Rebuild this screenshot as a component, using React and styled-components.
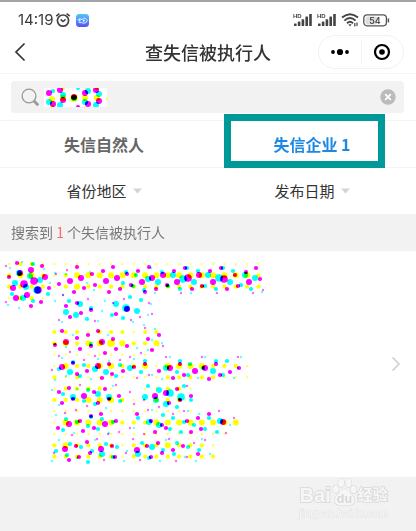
import React from "react";
import styled, { createGlobalStyle } from "styled-components";

const GlobalStyle = createGlobalStyle`
  * {
    box-sizing: border-box;
  }
  body {
    margin: 0;
    background: #f2f2f2;
    color: #333;
    font-family: "Noto Sans CJK SC", sans-serif;
  }
  button,
  input {
    font: inherit;
    color: inherit;
    border: none;
    padding: 0;
    background: none;
    outline: none;
  }
`;

const Page = styled.div`
  display: flex;
  flex-direction: column;
  min-height: 100vh;
  border-top: 2px solid #a3a3a3;
`;

const StatusBar = styled.div`
  display: flex;
  align-items: center;
  justify-content: space-between;
  height: 32px;
  padding: 4px 26px 0 18px;
  background: #fff;
`;

const StatusGroup = styled.div`
  display: flex;
  align-items: center;
  gap: ${(p) => p.$gap}px;
`;

const Clock = styled.span`
  font-family: Inter, sans-serif;
  font-size: 15px;
  line-height: 20px;
  color: #3a3a3a;
`;

const NavBar = styled.header`
  display: grid;
  grid-template-columns: 1fr auto 1fr;
  align-items: center;
  height: 40px;
  padding: 0 12px 3px;
  background: #fff;
  border-bottom: 1px solid #f3f3f3;
`;

const Title = styled.h1`
  margin: 0;
  font-size: 18px;
  line-height: 24px;
  font-weight: 500;
`;

const BackButton = styled.button`
  display: flex;
  justify-self: start;
`;

const Capsule = styled.div`
  display: flex;
  align-items: center;
  justify-self: end;
  width: 86px;
  height: 34px;
  border: 1px solid #f2f2f2;
  border-radius: 17px;
`;

const CapsuleButton = styled.button`
  display: flex;
  flex: 1;
  align-items: center;
  justify-content: center;
  height: 24px;
  & + & {
    border-left: 1px solid #f2f2f2;
  }
`;

const SearchBar = styled.form`
  padding: 7px 12px 7px 11px;
  background: #fff;
  border-bottom: 1px solid #f3f3f3;
`;

const SearchBox = styled.label`
  display: flex;
  align-items: center;
  gap: 4px;
  height: 32px;
  padding: 0 8px 0 10px;
  border-radius: 4px;
  background: #f2f2f2;
`;

const SearchInput = styled.input`
  flex: 1;
  min-width: 0;
  height: 24px;
  font-size: 15px;
`;

const ClearButton = styled.button`
  display: flex;
`;

const Tabs = styled.nav`
  display: flex;
  background: #fff;
  border-bottom: 1px solid #f3f3f3;
`;

const Tab = styled.button`
  position: relative;
  flex: 1;
  height: 46px;
  font-size: 16px;
  line-height: 24px;
  font-weight: 700;
  color: ${(p) => (p.$active ? "#1e88e5" : "#666")};
`;

const Highlight = styled.span`
  position: absolute;
  top: -7px;
  right: 31px;
  bottom: -1px;
  left: 16px;
  border: 7px solid #099;
`;

const Filters = styled.div`
  display: flex;
  background: #fff;
`;

const Filter = styled.button`
  display: flex;
  flex: 1;
  align-items: center;
  justify-content: center;
  gap: 6px;
  height: 46px;
  font-size: 15px;
  line-height: 24px;
`;

const Summary = styled.p`
  margin: 0;
  padding: 6px 11px 7px;
  font-size: 14px;
  line-height: 24px;
  color: #777;
  em {
    font-style: normal;
    color: #f56c6c;
  }
`;

const Result = styled.a`
  display: flex;
  align-items: center;
  justify-content: space-between;
  padding: 0 15px 0 0;
  background: #fff;
`;

const Footer = styled.footer`
  display: flex;
  flex: 1;
  justify-content: flex-end;
  padding: 0 28px 8px 0;
`;

const Watermark = styled.div`
  display: flex;
  flex-direction: column;
  align-items: center;
  color: #f6f6f6;
  font-family: "Liberation Sans", "Noto Sans CJK SC", sans-serif;
  -webkit-text-stroke: 2px #dcdcdc;
  paint-order: stroke fill;
`;

const WatermarkName = styled.div`
  display: flex;
  align-items: flex-end;
  gap: 1px;
  height: 30px;
  font-size: 20px;
  line-height: 24px;
  font-weight: 700;
  small {
    font-size: 15px;
    line-height: 24px;
  }
`;

const WatermarkSite = styled.div`
  font-size: 11px;
  line-height: 12px;
  color: #f6f6f6;
  -webkit-text-stroke: 1px #e4e4e4;
`;

const Dots = styled.svg`
  display: block;
  flex: none;
  circle {
    mix-blend-mode: multiply;
  }
`;

const INKS = { c: "#0ff", m: "#f0f", y: "#ff0" };
const RADII = [0, 1.2, 2.1, 3, 3.8];

// each dot is "x y size", sizes run from 1 to 4
const RESULT_MAGENTA = `17 263 2,6 266 1,42 266 2,31 270 3,20 273 3,9 277 2,45 277 3,34 281 4,24 284 4,13 288 3,49 288 2,38 290 4,27 295 3,16 298 3,6 302 1,41 302 2,31 306 2,
77 267 2,113 267 2,67 270 1,103 271 2,56 274 1,92 274 2,127 274 2,138 271 2,81 278 3,117 278 3,70 281 3,106 281 3,59 284 2,95 285 2,131 285 2,84 288 2,120 289 2,74 292 2,109 292 2,88 299 1,124 299 1,63 295 1,
149 267 2,185 268 2,221 268 2,256 268 2,174 271 2,210 271 2,246 272 2,163 275 3,199 275 3,235 275 2,152 278 3,188 278 4,224 279 4,260 279 2,142 282 3,177 282 3,213 282 3,249 282 3,167 285 2,202 286 2,238 286 2,156 289 2,192 289 2,227 289 2,263 290 1,145 292 2,181 293 1,217 293 1,253 293 1,
77 303 2,113 303 1,66 306 2,127 309 3,91 310 2,81 313 2,116 314 2,70 317 2,59 320 1,95 321 1,131 320 1,149 303 1,140 317 1,152 314 1,145 328 1,
62 331 2,98 331 2,88 335 2,77 338 2,113 339 2,66 342 3,102 342 3,55 345 2,91 346 2,127 346 2,80 349 2,116 349 2,70 352 1,105 353 2,59 356 1,95 356 1,130 357 1,159 335 2,148 339 2,163 346 1,152 350 2,141 353 1,
166 357 1,202 357 1,238 357 1,84 360 1,120 360 1,73 363 2,109 364 2,62 367 3,98 366 3,134 367 2,52 370 1,87 371 2,123 371 2,77 374 2,112 374 2,102 378 2,137 378 1,145 364 2,180 364 2,216 364 2,170 368 3,205 368 3,239 368 2,159 371 2,195 371 3,230 372 2,149 375 1,184 375 2,220 375 2,173 378 2,209 379 2,
80 385 1,116 385 1,69 388 2,105 389 2,59 392 2,94 392 2,130 392 1,84 396 3,119 396 2,73 399 2,109 399 2,62 403 2,98 403 2,134 404 1,187 386 1,177 389 2,166 393 3,155 396 3,191 396 2,180 400 2,144 400 1,169 403 2,159 407 1,87 406 1,
76 410 1,65 413 1,101 414 2,137 414 2,91 416 2,80 421 2,116 421 2,69 424 3,105 424 3,58 428 2,94 428 2,130 428 1,83 431 2,119 432 1,72 435 1,108 434 1,148 410 1,184 411 1,219 411 1,173 414 1,209 414 2,151 421 2,187 421 2,223 422 3,198 418 2,234 418 1,162 425 2,166 428 2,201 429 2,155 432 2,191 432 2,226 433 1,144 434 1,
97 439 1,133 439 1,87 442 2,76 446 2,112 446 2,65 449 3,101 449 3,137 450 3,54 453 1,90 453 2,126 453 1,79 457 2,115 457 2,69 460 2,104 460 1,169 439 1,158 443 2,205 440 1,194 443 1,183 446 2,147 446 2,173 450 2,162 453 2,198 454 2,151 457 2,187 457 1,140 460 1,176 461 1`;

const RESULT_CYAN = `10 268 1,22 262 1,33 264 2,19 273 3,44 269 1,30 276 3,40 280 3,15 283 3,50 283 1,26 287 3,37 290 4,12 294 2,48 294 2,23 298 3,33 301 2,8 305 1,19 308 1,
66 274 1,55 273 1,90 272 1,126 272 2,136 275 2,87 283 1,123 283 2,133 286 2,94 290 1,130 297 2,63 295 1,55 301 1,
151 268 1,187 268 2,223 268 2,162 272 2,198 271 2,233 271 2,173 275 3,208 275 3,245 275 3,148 279 3,183 279 4,219 278 4,255 278 3,158 282 3,194 282 3,230 282 3,168 286 2,205 286 2,241 285 2,180 289 2,216 289 2,251 289 2,144 290 2,155 293 1,191 293 1,262 292 1,
69 301 2,105 301 1,80 304 3,116 304 3,91 308 2,126 308 4,137 311 3,66 312 3,102 311 1,76 315 3,112 315 2,87 319 2,123 318 2,62 322 1,98 321 1,133 322 1,141 300 2,151 304 1,148 315 1,144 325 1,155 329 1,
73 335 1,108 335 1,55 344 1,91 344 2,66 347 1,102 342 1,137 348 1,62 358 1,98 359 1,134 359 1,152 340 1,162 343 1,148 350 1,
170 357 1,205 357 1,241 357 1,73 362 2,59 369 2,84 365 2,95 369 3,120 365 2,109 361 1,130 368 3,70 372 3,106 372 3,80 376 2,116 376 2,91 379 1,66 376 1,55 380 1,145 361 2,180 361 2,216 361 2,190 364 2,227 361 2,166 368 3,203 368 2,238 368 1,141 372 2,177 372 2,213 371 3,152 375 1,188 375 2,223 375 2,162 379 1,198 378 1,234 378 1,
73 397 3,88 390 2,113 386 1,63 394 2,98 394 3,77 389 1,109 397 3,84 401 2,120 401 2,52 390 1,59 405 1,95 404 2,148 386 2,184 386 2,159 390 3,170 393 4,145 397 3,181 397 4,156 400 3,191 400 2,166 404 3,177 407 2,
91 417 2,66 419 2,56 415 1,106 408 1,102 419 2,138 418 2,77 422 2,113 422 2,88 426 2,63 430 2,98 429 2,134 428 1,74 433 1,109 433 1,152 410 1,188 411 1,163 415 2,199 414 1,149 422 3,184 422 2,220 421 3,173 418 2,209 418 2,159 425 3,194 425 2,230 425 1,170 429 2,205 429 2,181 432 2,217 432 2,
59 440 1,95 440 1,70 444 2,106 444 2,81 447 2,117 447 2,56 451 2,92 451 2,127 451 1,67 455 2,102 454 3,138 454 3,77 458 1,113 457 2,88 462 2,52 461 1,124 461 1,166 440 1,202 439 1,142 443 2,177 443 2,152 447 3,188 447 2,163 450 2,199 450 2,174 454 2,210 454 1,149 458 2,185 457 1,160 461 1,196 461 1`;

// one string per row, one digit per grid column
const RESULT_YELLOW = [
  "12211111111111111111111",
  "23321233333333333333332",
  "22221232222222222222222",
  "1221",
  "",
  "",
  "00002221222122",
  "00002323343223",
  "0000111111111",
  "0000132233223133332221",
  "0000212111111122222111",
  "00001222210011221",
  "0000222333210222",
  "00001111111111111",
  "000013333322233333333",
  "00001111111111111111",
  "0000232222122232221",
  "0000222222122222222",
];

const SEARCH_MAGENTA =
  "49 93 3,60 90 3,63 100 3,53 104 3,74 97 3,85 93 3,96 90 3,99 101 3,88 104 3,78 107 2";
const SEARCH_CYAN =
  "53 91 2,63 95 3,49 102 3,60 105 3,74 98 3,88 91 3,99 94 3,85 102 3,96 105 3,78 88 2";
const SEARCH_YELLOW =
  "52 99 3,63 98 3,74 98 4,85 98 3,97 98 3,108 99 2,63 88 2,52 107 2,85 88 1,97 88 2,85 107 1";

function parseDots(list, ink) {
  return list.split(",").map((d) => {
    const [x, y, size] = d.trim().split(" ").map(Number);
    return { x, y, size, ink };
  });
}

function gridDots(rows) {
  return rows.flatMap((row, j) =>
    [...row].map((d, i) => ({
      x: 9 + i * 11.34,
      y: 264 + j * 11.33,
      size: Number(d),
      ink: "y",
    }))
  );
}

const resultDots = [
  ...gridDots(RESULT_YELLOW),
  ...parseDots(RESULT_MAGENTA, "m"),
  ...parseDots(RESULT_CYAN, "c"),
];

const searchDots = [
  ...parseDots(SEARCH_YELLOW, "y"),
  ...parseDots(SEARCH_MAGENTA, "m"),
  ...parseDots(SEARCH_CYAN, "c"),
];

function Halftone({ dots, x, y, width, height }) {
  return (
    <Dots
      width={width}
      height={height}
      viewBox={`${x} ${y} ${width} ${height}`}
      aria-hidden="true"
    >
      <rect x={x} y={y} width={width} height={height} fill="#fff" />
      {dots.map((d, i) => (
        <circle
          key={i}
          cx={d.x}
          cy={d.y}
          r={RADII[d.size]}
          fill={INKS[d.ink]}
          opacity={d.size === 1 ? 0.6 : 1}
        />
      ))}
    </Dots>
  );
}

function AlarmIcon() {
  return (
    <svg width="16" height="16" viewBox="0 0 16 16" fill="none" stroke="#444">
      <circle cx="8" cy="8.6" r="5.6" strokeWidth="1.7" />
      <path d="M1.2 4.2 4.4 1.6M14.8 4.2 11.6 1.6" strokeWidth="1.6" />
      <path d="M5.6 7.4 8 9.6 10.6 7.4" strokeWidth="1.5" />
    </svg>
  );
}

function AppBadge() {
  return (
    <svg width="13" height="13" viewBox="0 0 13 13">
      <defs>
        <linearGradient id="badge" x1="0" y1="0" x2="0" y2="1">
          <stop offset="0" stopColor="#55c4fb" />
          <stop offset="0.55" stopColor="#4d8dfb" />
          <stop offset="1" stopColor="#5b4dfa" />
        </linearGradient>
      </defs>
      <rect width="13" height="13" rx="3.4" fill="url(#badge)" />
      <path
        d="M1.5 5.5 4 7.2 3.4 4.6 6 5.6C7.6 3.2 10.4 4 11.2 6.6 10.4 9.2 7.6 9.8 5.4 8.6L2.6 8.2"
        fill="none"
        stroke="#e6f4ff"
        strokeWidth="1"
      />
      <circle cx="7.8" cy="6.7" r="1.1" fill="#e6f4ff" />
    </svg>
  );
}

function SignalIcon() {
  return (
    <svg width="20" height="14" viewBox="0 0 20 14" fill="#444">
      <text
        x="0"
        y="5"
        fontFamily="Liberation Sans, sans-serif"
        fontSize="6"
        fontWeight="700"
      >
        HD
      </text>
      <rect x="1" y="10.5" width="2.6" height="2.5" rx="0.5" />
      <rect x="4.8" y="8.5" width="2.6" height="4.5" rx="0.5" />
      <rect x="8.6" y="6.3" width="2.6" height="6.7" rx="0.5" />
      <rect x="12.4" y="3.6" width="2.6" height="9.4" rx="0.5" />
      <rect x="16.2" y="1" width="2.6" height="12" rx="0.5" />
    </svg>
  );
}

function WifiIcon() {
  return (
    <svg width="18" height="14" viewBox="0 0 18 14" fill="none" stroke="#444">
      <path d="M1 4.6Q9-2 17 4.6" strokeWidth="1.9" />
      <path d="M3.4 7.6Q9 2.6 14.6 7.6" strokeWidth="1.9" />
      <path d="M6 10.2Q9 7.4 12 10.2" strokeWidth="1.9" />
      <path d="M7.4 11.2h3.2L9 13.4z" fill="#444" stroke="none" />
      <path d="M13.8 13.5V10M16 9.5V13" strokeWidth="1.2" />
    </svg>
  );
}

function BatteryIcon() {
  return (
    <svg width="27" height="13" viewBox="0 0 27 13">
      <rect x="2.5" y="2.5" width="12" height="8" rx="2" fill="#ddd" />
      <rect
        x="0.8"
        y="0.8"
        width="22.6"
        height="11"
        rx="3.2"
        fill="none"
        stroke="#555"
        strokeWidth="1.3"
      />
      <path d="M25.4 4.4v4" stroke="#555" strokeWidth="1.5" />
      <text
        x="12"
        y="9.6"
        textAnchor="middle"
        fontFamily="Inter, sans-serif"
        fontSize="9"
        fontWeight="500"
        fill="#333"
      >
        54
      </text>
    </svg>
  );
}

function Caret() {
  return (
    <svg width="9" height="6" viewBox="0 0 9 6" aria-hidden="true">
      <path d="M0 0.5h9L4.5 5.6z" fill="#d4d4d4" />
    </svg>
  );
}

function Paw() {
  return (
    <svg width="25" height="30" viewBox="0 0 26 30">
      <g fill="#f6f6f6" stroke="#d8d8d8" strokeWidth="1.2">
        <ellipse cx="4" cy="12" rx="3" ry="4" />
        <ellipse cx="9.5" cy="5.5" rx="3.2" ry="4.5" />
        <ellipse cx="17" cy="5.5" rx="3.2" ry="4.5" />
        <ellipse cx="22.5" cy="12.5" rx="3" ry="4" />
        <path d="M13 12C17 12 18 16 21 18.5 25 22 24 28.5 18.5 28.5H7.5C2 28.5 1 22 5 18.5 8 16 9 12 13 12Z" />
      </g>
      <text
        x="13"
        y="26"
        textAnchor="middle"
        fontFamily="Liberation Sans, sans-serif"
        fontSize="13"
        fontWeight="700"
        fill="#d8d8d8"
        stroke="none"
      >
        du
      </text>
    </svg>
  );
}

export default function App() {
  const [tab, setTab] = React.useState("company");
  const [query, setQuery] = React.useState("");

  return (
    <>
      <GlobalStyle />
      <Page>
        <StatusBar>
          <StatusGroup $gap={5}>
            <StatusGroup $gap={1}>
              <Clock>14:19</Clock>
              <AlarmIcon />
            </StatusGroup>
            <AppBadge />
          </StatusGroup>
          <StatusGroup $gap={4}>
            <SignalIcon />
            <SignalIcon />
            <WifiIcon />
            <BatteryIcon />
          </StatusGroup>
        </StatusBar>
        <NavBar>
          <BackButton aria-label="返回">
            <svg width="16" height="20" viewBox="0 0 16 20" fill="none">
              <path d="M12.5 1.5 4 10l8.5 8.5" stroke="#333" strokeWidth="1.7" />
            </svg>
          </BackButton>
          <Title>查失信被执行人</Title>
          <Capsule>
            <CapsuleButton aria-label="更多">
              <svg width="18" height="8" viewBox="0 0 18 8">
                <circle cx="2" cy="4" r="1.9" />
                <circle cx="9" cy="4" r="3.1" />
                <circle cx="16" cy="4" r="1.9" />
              </svg>
            </CapsuleButton>
            <CapsuleButton aria-label="关闭">
              <svg width="18" height="18" viewBox="0 0 18 18">
                <circle
                  cx="9"
                  cy="9"
                  r="7"
                  fill="none"
                  stroke="#000"
                  strokeWidth="2.2"
                />
                <circle cx="9" cy="9" r="2.8" />
              </svg>
            </CapsuleButton>
          </Capsule>
        </NavBar>
        <SearchBar onSubmit={(e) => e.preventDefault()}>
          <SearchBox>
            <svg width="19" height="19" viewBox="0 0 19 19" fill="none">
              <circle cx="8" cy="8" r="6.9" stroke="#999" strokeWidth="1.3" />
              <path d="M12.8 12.8 17.2 17.2" stroke="#999" strokeWidth="2.8" />
            </svg>
            <Halftone dots={searchDots} x={44} y={88} width={63} height={19} />
            <SearchInput
              aria-label="搜索"
              value={query}
              onChange={(e) => setQuery(e.target.value)}
            />
            <ClearButton
              type="button"
              aria-label="清除"
              onClick={() => setQuery("")}
            >
              <svg width="16" height="16" viewBox="0 0 16 16">
                <circle cx="8" cy="8" r="7.7" fill="#bbb" />
                <path
                  d="M5.2 5.2l5.6 5.6M10.8 5.2l-5.6 5.6"
                  stroke="#fff"
                  strokeWidth="1.7"
                />
              </svg>
            </ClearButton>
          </SearchBox>
        </SearchBar>
        <Tabs>
          <Tab $active={tab === "person"} onClick={() => setTab("person")}>
            失信自然人
          </Tab>
          <Tab $active={tab === "company"} onClick={() => setTab("company")}>
            失信企业 1
            <Highlight />
          </Tab>
        </Tabs>
        <Filters>
          <Filter>
            省份地区
            <Caret />
          </Filter>
          <Filter>
            发布日期
            <Caret />
          </Filter>
        </Filters>
        <Summary>
          搜索到 <em>1</em> 个失信被执行人
        </Summary>
        <Result href="#detail" aria-label="查看详情">
          <Halftone dots={resultDots} x={0} y={251} width={270} height={226} />
          <svg width="10" height="16" viewBox="0 0 10 16" fill="none">
            <path d="M1.5 1.5 8 8l-6.5 6.5" stroke="#d0d0d0" strokeWidth="1.7" />
          </svg>
        </Result>
        <Footer>
          <Watermark>
            <WatermarkName>
              Bai
              <Paw />
              <small>经验</small>
            </WatermarkName>
            <WatermarkSite>jingyan.baidu.com</WatermarkSite>
          </Watermark>
        </Footer>
      </Page>
    </>
  );
}
